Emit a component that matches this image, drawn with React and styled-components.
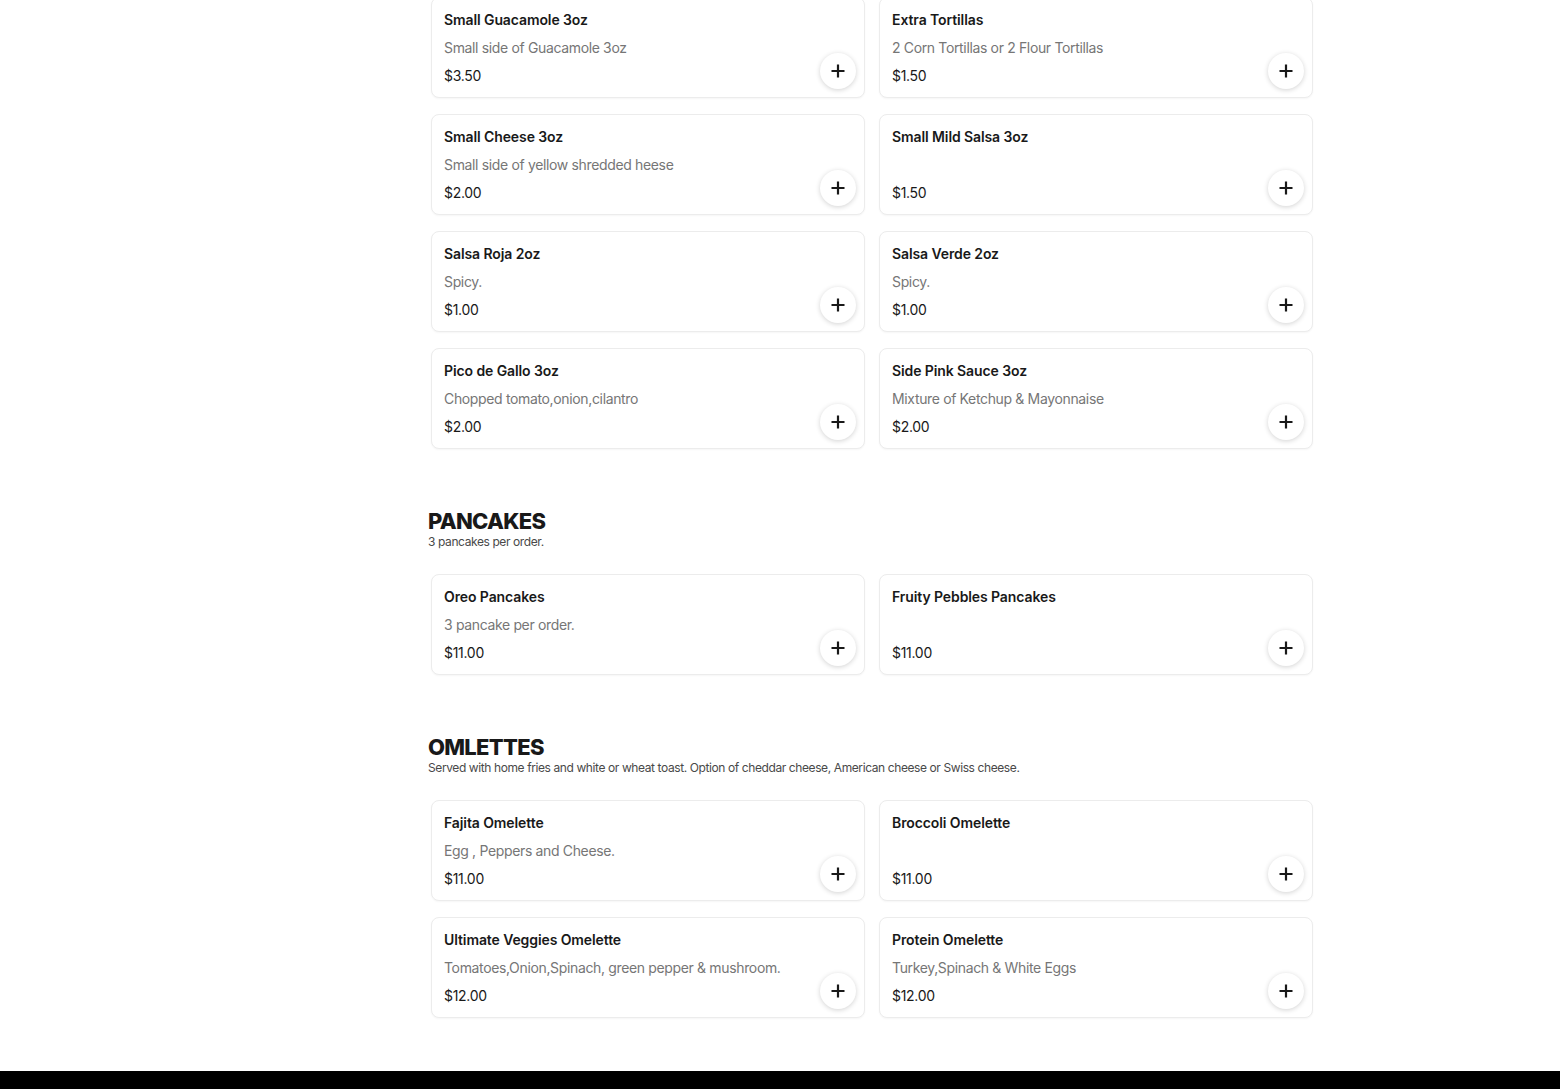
import React from "react";
import styled, { createGlobalStyle } from "styled-components";

const Global = createGlobalStyle`
  html, body { margin: 0; padding: 0; background: #fff; }
  body { font-family: Inter, "Open Sans", Arial, sans-serif; color: #191919; -webkit-font-smoothing: antialiased; }
`;

const Page = styled.div`
  display: flex;
  flex-direction: column;
  min-height: 1089px;
`;

const Main = styled.main`
  width: 888px;
  margin: -3px 0 0 428px;
  box-sizing: border-box;
  display: flex;
  flex-direction: column;
  gap: 59px;
  padding-bottom: 52px;
`;

const Section = styled.section`
  display: flex;
  flex-direction: column;
`;

const Heading = styled.h2`
  margin: 0;
  font-size: 22px;
  line-height: 26px;
  font-weight: 800;
  letter-spacing: -0.7px;
  color: #191919;
`;

const SubHeading = styled.p`
  margin: 0 0 24px;
  font-size: 12px;
  line-height: 16px;
  letter-spacing: -0.4px;
  color: #494949;
`;

const Grid = styled.div`
  display: grid;
  grid-template-columns: 434px 434px;
  column-gap: 14px;
  row-gap: 16px;
  padding-left: 3px;
`;

const Card = styled.div`
  box-sizing: border-box;
  height: 101px;
  border: 1px solid #ececec;
  border-radius: 8px;
  box-shadow: 0 1px 2px rgba(0, 0, 0, 0.04);
  padding: 12px 8px 8px 12px;
  display: flex;
  align-items: flex-end;
  background: #fff;
`;

const Info = styled.div`
  flex: 1;
  align-self: stretch;
  display: flex;
  flex-direction: column;
  gap: 8px;
`;

const Name = styled.div`
  font-size: 14px;
  line-height: 20px;
  font-weight: 600;
  letter-spacing: -0.1px;
  color: #191919;
`;

const Desc = styled.div`
  font-size: 14px;
  line-height: 20px;
  letter-spacing: -0.35px;
  color: #767676;
  height: 20px;
`;

const Price = styled.div`
  font-size: 14px;
  line-height: 20px;
  letter-spacing: -0.3px;
  color: #191919;
`;

const AddButton = styled.button`
  width: 36px;
  height: 36px;
  border-radius: 50%;
  border: none;
  background: #fff;
  box-shadow: 0 1px 5px rgba(0, 0, 0, 0.18);
  display: flex;
  align-items: center;
  justify-content: center;
  padding: 0;
  flex-shrink: 0;
  cursor: pointer;
`;

const Footer = styled.footer`
  margin-top: auto;
  height: 18px;
  background: #000;
`;

const Plus = () => (
  <svg width="14" height="14" viewBox="0 0 14 14" fill="none">
    <path d="M7 0.5v13M0.5 7h13" stroke="#191919" strokeWidth="2.2" />
  </svg>
);

const Item = ({ name, desc, price }) => (
  <Card>
    <Info>
      <Name>{name}</Name>
      <Desc>{desc}</Desc>
      <Price>{price}</Price>
    </Info>
    <AddButton aria-label="Add">
      <Plus />
    </AddButton>
  </Card>
);

const sides = [
  ["Small Guacamole 3oz", "Small side of Guacamole 3oz", "$3.50"],
  ["Extra Tortillas", "2 Corn Tortillas or 2 Flour Tortillas", "$1.50"],
  ["Small Cheese 3oz", "Small side of yellow shredded heese", "$2.00"],
  ["Small Mild Salsa 3oz", "", "$1.50"],
  ["Salsa Roja 2oz", "Spicy.", "$1.00"],
  ["Salsa Verde 2oz", "Spicy.", "$1.00"],
  ["Pico de Gallo 3oz", "Chopped tomato,onion,cilantro", "$2.00"],
  ["Side Pink Sauce 3oz", "Mixture of Ketchup & Mayonnaise", "$2.00"],
];

const pancakes = [
  ["Oreo Pancakes", "3 pancake per order.", "$11.00"],
  ["Fruity Pebbles Pancakes", "", "$11.00"],
];

const omelettes = [
  ["Fajita Omelette", "Egg , Peppers and Cheese.", "$11.00"],
  ["Broccoli Omelette", "", "$11.00"],
  ["Ultimate Veggies Omelette", "Tomatoes,Onion,Spinach, green pepper & mushroom.", "$12.00"],
  ["Protein Omelette", "Turkey,Spinach & White Eggs", "$12.00"],
];

const Items = ({ list }) => (
  <Grid>
    {list.map(([n, d, p]) => (
      <Item key={n} name={n} desc={d} price={p} />
    ))}
  </Grid>
);

export default function App() {
  return (
    <Page>
      <Global />
      <Main>
        <Section>
          <Items list={sides} />
        </Section>
        <Section>
          <Heading>PANCAKES</Heading>
          <SubHeading>3 pancakes per order.</SubHeading>
          <Items list={pancakes} />
        </Section>
        <Section>
          <Heading>OMLETTES</Heading>
          <SubHeading>
            Served with home fries and white or wheat toast. Option of cheddar cheese, American cheese or Swiss cheese.
          </SubHeading>
          <Items list={omelettes} />
        </Section>
      </Main>
      <Footer />
    </Page>
  );
}
